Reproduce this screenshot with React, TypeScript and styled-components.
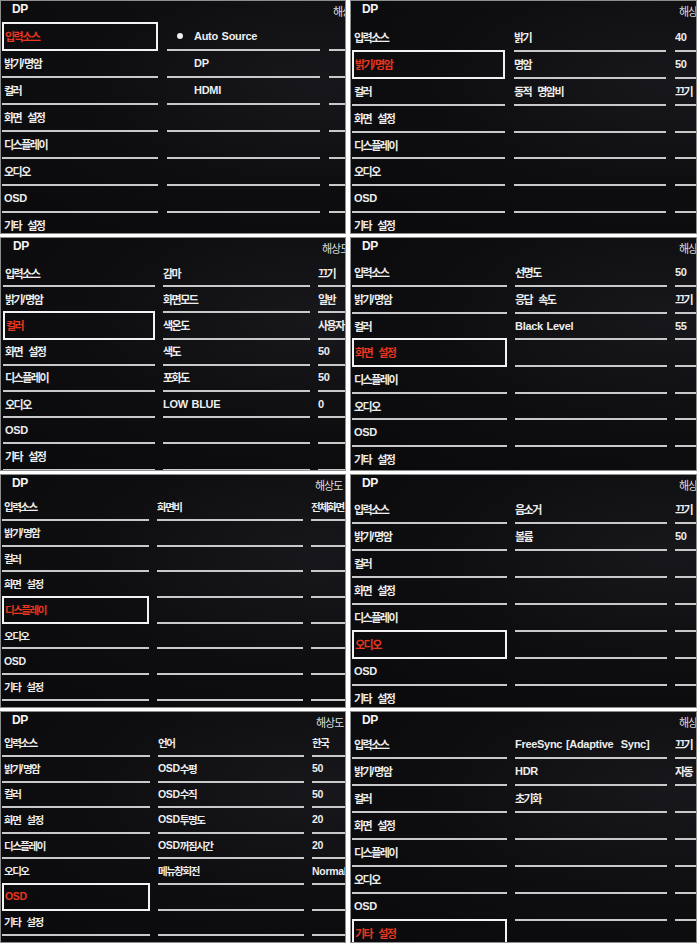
import React from "react";
import styled, { createGlobalStyle, css } from "styled-components";

const GlobalStyle = createGlobalStyle`
  body {
    margin: 0;
    background: #ffffff;
  }
`;

const Sheet = styled.div`
  display: grid;
  grid-template-columns: 346px 347px;
  grid-template-rows: 234px 234px 234px 232px;
  gap: 3px 4px;
  width: 700px;
`;

const Screen = styled.section<{ $fs: number }>`
  overflow: hidden;
  background: radial-gradient(ellipse at 92% 35%, #18181c 0%, #0e0e11 50%, #0a0a0c 100%);
  outline: 1px solid #8d8d8d;
  outline-offset: -1px;
  font-family: "Liberation Sans", "Noto Sans CJK KR", sans-serif;
  font-weight: 700;
  font-size: ${(p) => p.$fs}px;
  color: #ededed;
`;

const Header = styled.div<{ $cols: string; $gap: number; $h: number; $x: number }>`
  display: grid;
  grid-template-columns: ${(p) => p.$cols};
  column-gap: ${(p) => p.$gap}px;
  height: ${(p) => p.$h}px;
  padding-left: ${(p) => p.$x}px;
  align-items: start;
`;

const Source = styled.span`
  padding: 2px 0 0 10px;
  font-size: 12px;
  letter-spacing: -0.3px;
  color: #f4f4f4;
`;

const Resolution = styled.span`
  grid-column: 3;
  padding: 3px 0 0 4px;
  font-size: 11px;
  font-weight: 400;
  letter-spacing: -1px;
  white-space: nowrap;
  color: #dedede;
`;

const Menu = styled.div<{ $cols: string; $gap: number; $row: number; $x: number }>`
  display: grid;
  grid-template-columns: ${(p) => p.$cols};
  grid-auto-rows: ${(p) => p.$row}px;
  column-gap: ${(p) => p.$gap}px;
  padding-left: ${(p) => p.$x}px;
`;

const Cell = styled.div<{ $active?: boolean; $pad?: number }>`
  display: flex;
  align-items: center;
  box-sizing: border-box;
  min-width: 0;
  padding: 0 0 1px ${(p) => p.$pad ?? 0}px;
  border-bottom: 2px solid #c9c9c9;
  white-space: pre;
  overflow: hidden;
  ${(p) =>
    p.$active &&
    css`
      margin-top: -2px;
      padding-left: 1px;
      border: 2px solid #f2f2f2;
      color: #e8361f;
    `}
`;

const Dot = styled.span<{ $on: boolean }>`
  flex: 0 0 17px;
  display: flex;
  align-items: center;
  &::before {
    content: "";
    width: 6px;
    height: 6px;
    border-radius: 50%;
    background: ${(p) => (p.$on ? "#eeeeee" : "transparent")};
  }
`;

const Latin = styled.span`
  letter-spacing: -0.3px;
  word-spacing: 1px;
`;

const Gap = styled.span`
  display: inline-block;
  width: 6px;
`;

const Hangul = styled.span`
  letter-spacing: -1.5px;
`;

function Label({ text }: { text: string }) {
  const runs = text.match(/[\u3131-\uD79D]+| (?=[\u3131-\uD79D])|[^\u3131-\uD79D]+/g) ?? [];
  return (
    <>
      {runs.map((r, i) =>
        /[\u3131-\uD79D]/.test(r) ? (
          <Hangul key={i}>{r}</Hangul>
        ) : r === " " ? (
          <Gap key={i} />
        ) : (
          <Latin key={i}>{r}</Latin>
        )
      )}
    </>
  );
}

const MENU = ["입력소스", "밝기/명암", "컬러", "화면 설정", "디스플레이", "오디오", "OSD", "기타 설정"];

interface Shot {
  selected: number;
  mid: string[];
  right: string[];
  x0: number;
  leftW: number;
  midW: number;
  gap: number;
  headerH: number;
  rowH: number;
  fs: number;
  bullet?: boolean;
}

const SHOTS: Shot[] = [
  { selected: 0, mid: ["Auto Source", "DP", "HDMI"], right: [], x0: 2, leftW: 156, midW: 153, gap: 9, headerH: 24, rowH: 27, fs: 11, bullet: true },
  { selected: 1, mid: ["밝기", "명암", "동적 명암비"], right: ["40", "50", "끄기"], x0: 2, leftW: 153, midW: 152, gap: 9, headerH: 25, rowH: 26.9, fs: 11 },
  { selected: 2, mid: ["감마", "화면모드", "색온도", "색도", "포화도", "LOW BLUE"], right: ["끄기", "일반", "사용자", "50", "50", "0"], x0: 3, leftW: 152, midW: 147, gap: 8, headerH: 24, rowH: 26.2, fs: 11 },
  { selected: 3, mid: ["선명도", "응답 속도", "Black Level"], right: ["50", "끄기", "55"], x0: 2, leftW: 155, midW: 152, gap: 8, headerH: 23.3, rowH: 26.7, fs: 11 },
  { selected: 4, mid: ["화면비"], right: ["전체화면"], x0: 2, leftW: 147, midW: 146, gap: 8, headerH: 21.3, rowH: 25.7, fs: 10.5 },
  { selected: 5, mid: ["음소거", "볼륨"], right: ["끄기", "50"], x0: 2, leftW: 155, midW: 152, gap: 8, headerH: 23, rowH: 27, fs: 11 },
  { selected: 6, mid: ["언어", "OSD수평", "OSD수직", "OSD투명도", "OSD꺼짐시간", "메뉴창회전"], right: ["한국", "50", "50", "20", "20", "Normal"], x0: 2, leftW: 148, midW: 146, gap: 8, headerH: 20.4, rowH: 25.6, fs: 10.5 },
  { selected: 7, mid: ["FreeSync [Adaptive  Sync]", "HDR", "초기화"], right: ["끄기", "자동"], x0: 2, leftW: 155, midW: 152, gap: 8, headerH: 21, rowH: 27, fs: 11 },
];

function OsdShot({ shot }: { shot: Shot }) {
  const cols = `${shot.leftW}px ${shot.midW}px 1fr`;
  return (
    <Screen $fs={shot.fs}>
      <Header $cols={cols} $gap={shot.gap} $h={shot.headerH} $x={shot.x0}>
        <Source>DP</Source>
        <Resolution>해상도</Resolution>
      </Header>
      <Menu $cols={cols} $gap={shot.gap} $row={shot.rowH} $x={shot.x0}>
        {MENU.map((item, i) => (
          <React.Fragment key={item}>
            <Cell $active={i === shot.selected} $pad={2}>
              <Label text={item} />
            </Cell>
            <Cell $pad={shot.bullet ? 10 : 0}>
              {shot.bullet && <Dot $on={i === 0} />}
              {shot.mid[i] && <Label text={shot.mid[i]} />}
            </Cell>
            <Cell>{shot.right[i] && <Label text={shot.right[i]} />}</Cell>
          </React.Fragment>
        ))}
      </Menu>
    </Screen>
  );
}

export default function App() {
  return (
    <>
      <GlobalStyle />
      <Sheet>
        {SHOTS.map((s, i) => (
          <OsdShot key={i} shot={s} />
        ))}
      </Sheet>
    </>
  );
}
